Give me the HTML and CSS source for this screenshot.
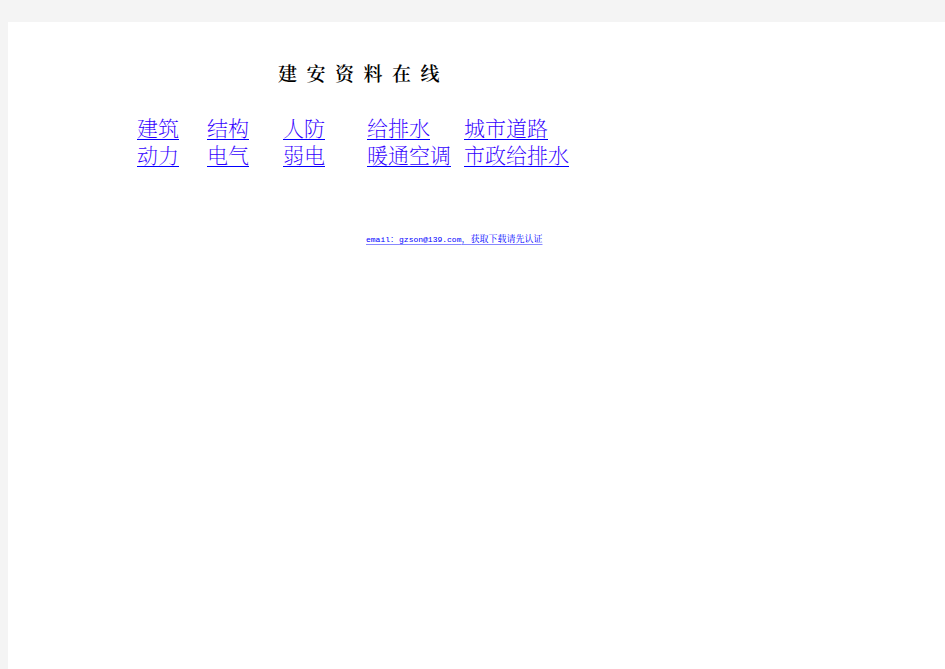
FILE: index.html
```html
<!DOCTYPE html>
<html lang="zh-CN">
<head>
<meta charset="utf-8">
<title>建安资料在线</title>
<link rel="stylesheet" href="styles.css">
</head>
<body>
<main class="page">
  <h1 class="title">建  安  资  料  在  线</h1>
  <nav class="topics">
    <a href="#">建筑</a>
    <a href="#">结构</a>
    <a href="#">人防</a>
    <a href="#">给排水</a>
    <a href="#">城市道路</a>
    <a href="#">动力</a>
    <a href="#">电气</a>
    <a href="#">弱电</a>
    <a href="#">暖通空调</a>
    <a href="#">市政给排水</a>
  </nav>
  <p class="contact"><a href="mailto:gzson@139.com"><span class="latin">email</span>：<span class="latin">gzson@139.com</span>，获取下载请先认证</a></p>
</main>
</body>
</html>
```
FILE: styles.css
```css
* {
  box-sizing: border-box;
}

body {
  margin: 0;
  padding: 22px 0 0 8px;
  min-height: 100vh;
  display: flex;
  background: #f4f4f4;
  color: #000;
  font-family: "Liberation Serif", "Noto Serif CJK SC", "Noto Sans CJK SC", serif;
}

.page {
  flex: 1;
  background: #fff;
  padding: 41px 0 0 129px;
}

.title {
  margin: 0 0 29px 141px;
  font-size: 19px;
  line-height: 24px;
  font-weight: 600;
  white-space: pre;
}

a {
  color: #00f;
  text-decoration: underline;
}

.topics {
  display: grid;
  grid-template-columns: 70px 76px 84px 97px max-content;
  justify-items: start;
  font-size: 21px;
  font-weight: 200;
  line-height: 27px;
  white-space: nowrap;
}

.topics a {
  color: #30f;
  text-decoration-color: #00f;
  text-decoration-thickness: 1px;
  text-underline-offset: 3px;
}

.contact {
  margin: 61px 0 0 229px;
  font-size: 9px;
  line-height: 16px;
  white-space: nowrap;
}

.contact a {
  text-decoration-color: #88f;
  text-decoration-thickness: 1px;
  text-underline-offset: 2px;
}

.latin {
  font-family: "Liberation Mono", monospace;
  font-size: 8px;
}
```
